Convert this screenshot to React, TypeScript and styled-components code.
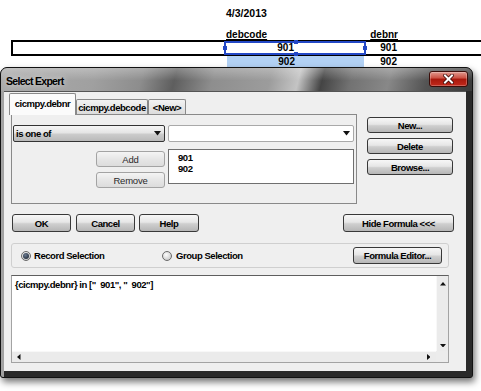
import React from "react";
import styled, { createGlobalStyle, css } from "styled-components";

const UI = `"Liberation Sans", Arial, sans-serif`;
const REPORT = `"Liberation Sans", Arial, sans-serif`;

const GlobalStyle = createGlobalStyle`
  html, body {
    margin: 0;
    padding: 0;
    background: #fff;
    overflow: hidden;
  }
  * {
    box-sizing: border-box;
  }
`;

const Page = styled.div`
  width: 481px;
  height: 391px;
  overflow: hidden;
  display: flex;
  flex-direction: column;
`;

/* ---------- report behind the dialog ---------- */

const Report = styled.div`
  height: 67px;
  display: flex;
  flex-direction: column;
  font-family: ${REPORT};
  font-weight: bold;
  font-size: 10px;
  color: #000;
`;

const DateLine = styled.div`
  height: 30px;
  padding: 7px 0 0 226px;
  font-size: 10.5px;
  line-height: 12px;
`;

const FieldRow = styled.div<{ $height: number }>`
  display: grid;
  grid-template-columns: 211px 142px 32px;
  height: ${(p) => p.$height}px;
  margin-left: 13px;
`;

const DetailBox = styled.div`
  display: grid;
  grid-template-columns: 211px 142px 32px;
  height: 16px;
  margin-left: 11px;
  width: 480px;
  border: 2px solid #000;
  border-right: none;
`;

const HeaderText = styled.div<{ $align: "left" | "right" }>`
  align-self: end;
  line-height: 10px;
  text-decoration: underline;
  text-align: ${(p) => p.$align};
  padding-left: ${(p) => (p.$align === "left" ? 2 : 0)}px;
`;

const SelectedCell = styled.div`
  position: relative;
  margin: -1px 0;
  border: 2px solid #2348c6;
  display: flex;
  align-items: center;
  justify-content: flex-end;
  padding-right: 70px;
  line-height: 10px;
`;

const Handle = styled.span<{ $spot: "left" | "right" | "top" | "bottom" }>`
  position: absolute;
  width: 4px;
  height: 4px;
  background: #2348c6;
  ${(p) =>
    p.$spot === "left"
      ? css`left: -3px; top: 3px;`
      : p.$spot === "right"
      ? css`right: -3px; top: 3px;`
      : p.$spot === "top"
      ? css`top: -3px; left: 68px;`
      : css`bottom: -3px; left: 68px;`}
`;

const HighlightCell = styled.div`
  margin: 0 2px 0 3px;
  background: #b2d1f4;
  display: flex;
  align-items: center;
  justify-content: flex-end;
  padding-right: 69px;
  line-height: 10px;
`;

const ValueCell = styled.div`
  display: flex;
  align-items: center;
  justify-content: flex-end;
  padding-right: 1px;
  line-height: 10px;
`;

/* ---------- dialog window ---------- */

const Dialog = styled.div`
  width: 473px;
  height: 311px;
  display: flex;
  flex-direction: column;
  border: 1px solid #121212;
  border-radius: 7px 7px 3px 3px;
  overflow: hidden;
  background: #262626;
  box-shadow: 2px 4px 7px rgba(0, 0, 0, 0.55);
  font-family: ${UI};
  color: #000;
`;

const TitleBar = styled.div`
  height: 23px;
  flex-shrink: 0;
  display: flex;
  align-items: flex-start;
  justify-content: space-between;
  padding: 0 4px;
  background:
    linear-gradient(180deg, rgba(255, 255, 255, 0.28), rgba(255, 255, 255, 0) 55%),
    linear-gradient(
      104deg,
      #ababab 0%,
      #a0a0a0 20%,
      #8d8d8d 30%,
      #5e5e5e 37%,
      #8e8e8e 45%,
      #9c9c9c 57%,
      #c4c4c4 63%,
      #444 68%,
      #727272 74%,
      #888 82%,
      #545454 90%,
      #3a3a3a 100%
    );
`;

const Title = styled.div`
  padding: 7px 0 0 1px;
  font-size: 10.5px;
  letter-spacing: -0.7px;
  line-height: 13px;
  font-weight: bold;
  color: #000;
  text-shadow: 0 0 6px rgba(255, 255, 255, 0.7);
`;

const CloseButton = styled.div`
  margin-top: 3px;
  width: 39px;
  height: 16px;
  border: 1px solid #3b0c08;
  border-radius: 3px;
  display: flex;
  align-items: center;
  justify-content: center;
  background: linear-gradient(180deg, #e09a8f 0%, #cc5244 42%, #a8180c 52%, #c22a1c 100%);
  box-shadow: inset 0 0 0 1px rgba(255, 255, 255, 0.25);
`;

const Frame = styled.div`
  flex: 1;
  display: flex;
  padding: 0 6px 6px 3px;
  background: linear-gradient(90deg, #a2a2a2 0, #a2a2a2 3px, #2a2a2a 3px);
`;

const Client = styled.div`
  flex: 1;
  display: flex;
  flex-direction: column;
  background: #efefef;
  border-top: 1px solid #555;
  padding: 1px 12px 8px 7px;
  font-size: 9.5px;
  letter-spacing: -0.45px;
  font-weight: bold;
`;

const TopArea = styled.div`
  display: flex;
  align-items: flex-start;
`;

const TabControl = styled.div`
  width: 346px;
  flex-shrink: 0;
  display: flex;
  flex-direction: column;
`;

const TabStrip = styled.div`
  height: 21px;
  display: flex;
  align-items: flex-end;
  position: relative;
  z-index: 1;
`;

const Tab = styled.div<{ $active?: boolean; $width: number }>`
  width: ${(p) => p.$width}px;
  border: 1px solid #898989;
  border-bottom: none;
  border-radius: 2px 2px 0 0;
  display: flex;
  align-items: center;
  justify-content: center;
  line-height: 11px;
  white-space: nowrap;
  ${(p) =>
    p.$active
      ? css`
          height: 22px;
          margin: 0 0 -1px -2px;
          background: #fbfbfb;
          padding-bottom: 2px;
        `
      : css`
          height: 15px;
          margin-left: 0;
          background: linear-gradient(180deg, #f3f3f3, #dcdcdc);
        `}
`;

const TabPanel = styled.div`
  height: 90px;
  border: 1px solid #898989;
  background: #efefef;
  padding: 10px 0 0 1px;
  display: flex;
  flex-direction: column;
`;

const ComboRow = styled.div`
  display: flex;
  gap: 3px;
`;

const Combo = styled.div<{ $width: number; $plain?: boolean }>`
  width: ${(p) => p.$width}px;
  height: 17px;
  display: flex;
  align-items: center;
  justify-content: space-between;
  padding: 0 3px 0 2px;
  border-radius: 2px;
  ${(p) =>
    p.$plain
      ? css`
          background: #fff;
          border: 1px solid #a9a9a9;
        `
      : css`
          border: 1px solid #333;
          background: linear-gradient(180deg, #f6f6f6 0%, #e4e4e4 48%, #cdcdcd 52%, #b9b9b9 100%);
        `}
`;

const EditRow = styled.div`
  margin-top: 7px;
  display: flex;
  gap: 3px;
`;

const ButtonStack = styled.div`
  width: 152px;
  padding: 2px 0 0 83px;
  display: flex;
  flex-direction: column;
  gap: 5px;
`;

const ListBox = styled.div`
  width: 186px;
  height: 35px;
  background: #fff;
  border: 1px solid #6f6f6f;
  padding: 2px 0 0 9px;
  line-height: 11px;
`;

const SideButtons = styled.div`
  margin: 24px 0 0 10px;
  width: 86px;
  display: flex;
  flex-direction: column;
  gap: 5px;
`;

const Button = styled.div<{ $width: number; $height?: number; $soft?: boolean }>`
  width: ${(p) => p.$width}px;
  height: ${(p) => p.$height ?? 16}px;
  flex-shrink: 0;
  display: flex;
  align-items: center;
  justify-content: center;
  border-radius: 3px;
  white-space: nowrap;
  ${(p) =>
    p.$soft
      ? css`
          border: 1px solid #a3a3a3;
          background: linear-gradient(180deg, #f4f4f4 0%, #e6e6e6 50%, #dcdcdc 100%);
          font-weight: normal;
          letter-spacing: -0.2px;
          color: #2a2a2a;
        `
      : css`
          border: 1px solid #383838;
          background: linear-gradient(180deg, #f7f7f7 0%, #e6e6e6 45%, #cfcfcf 55%, #b6b6b6 100%);
        `}
`;

const ButtonRow = styled.div`
  margin-top: 10px;
  height: 18px;
  display: flex;
  align-items: stretch;
  padding-left: 1px;
  gap: 4px;

  & > :nth-child(2) {
    margin-left: 1px;
  }
  & > :last-child {
    margin-left: auto;
  }
`;

const GroupBox = styled.div`
  margin: 11px 5px 0 0;
  height: 25px;
  border: 1px solid #cfcfcf;
  border-radius: 3px;
  display: flex;
  align-items: center;
  padding: 0 6px 0 9px;
`;

const RadioOption = styled.div<{ $width?: number }>`
  display: flex;
  align-items: center;
  gap: 3px;
  ${(p) => p.$width && css`width: ${p.$width}px;`}
`;

const Radio = styled.span<{ $checked?: boolean }>`
  width: 10px;
  height: 10px;
  border-radius: 50%;
  border: 1px solid #6a6a6a;
  background: radial-gradient(circle at 40% 35%, #fdfdfd, #bdbdbd);
  position: relative;
  flex-shrink: 0;
  ${(p) =>
    p.$checked &&
    css`
      &::after {
        content: "";
        position: absolute;
        inset: 1px;
        border-radius: 50%;
        background: radial-gradient(circle at 40% 35%, #6a7a90, #141c28);
      }
    `}
`;

const FormulaBox = styled.div`
  margin: 7px 5px 0 0;
  flex: 1;
  display: grid;
  grid-template-columns: 1fr 12px;
  grid-template-rows: 1fr 11px;
  border: 1px solid #a3a3a3;
  border-top-color: #5e5e5e;
  background: #fff;
`;

const FormulaText = styled.div`
  padding: 3px 0 0 3px;
  line-height: 11px;
  white-space: pre;
`;

const VScroll = styled.div`
  background: #ebebeb;
  border-left: 1px solid #f8f8f8;
  display: flex;
  flex-direction: column;
  align-items: center;
  justify-content: space-between;
  padding: 6px 0 4px;
`;

const HScroll = styled.div`
  background: #ebebeb;
  border-top: 1px solid #f8f8f8;
  display: flex;
  align-items: center;
  justify-content: space-between;
  padding: 0 6px 0 5px;
`;

const Corner = styled.div`
  background: #ececec;
`;

type Dir = "up" | "down" | "left" | "right";

const Arrow = ({ dir, size = 7 }: { dir: Dir; size?: number }) => {
  const h = Math.ceil(size / 2) + 0.5;
  const pts: Record<Dir, string> = {
    down: `0,0 ${size},0 ${size / 2},${h}`,
    up: `0,${h} ${size},${h} ${size / 2},0`,
    right: `0,0 0,${size} ${h},${size / 2}`,
    left: `${h},0 ${h},${size} 0,${size / 2}`,
  };
  const vertical = dir === "up" || dir === "down";
  return (
    <svg width={vertical ? size : h} height={vertical ? h : size} style={{ display: "block" }}>
      <polygon points={pts[dir]} fill="#111" />
    </svg>
  );
};

const CloseGlyph = () => (
  <svg width="11" height="10" viewBox="0 0 11 10">
    <path d="M2 1.5 L9 8.5 M9 1.5 L2 8.5" stroke="#3a0704" strokeWidth="3.6" strokeLinecap="square" />
    <path d="M2 1.5 L9 8.5 M9 1.5 L2 8.5" stroke="#fff" strokeWidth="2" strokeLinecap="square" />
  </svg>
);

export default function App() {
  return (
    <Page>
      <GlobalStyle />
      <Report>
        <DateLine>4/3/2013</DateLine>
        <FieldRow $height={10}>
          <div />
          <HeaderText $align="left">debcode</HeaderText>
          <HeaderText $align="right">debnr</HeaderText>
        </FieldRow>
        <DetailBox>
          <div />
          <SelectedCell>
            901
            <Handle $spot="left" />
            <Handle $spot="right" />
            <Handle $spot="top" />
            <Handle $spot="bottom" />
          </SelectedCell>
          <ValueCell>901</ValueCell>
        </DetailBox>
        <FieldRow $height={11}>
          <div />
          <HighlightCell>902</HighlightCell>
          <ValueCell>902</ValueCell>
        </FieldRow>
      </Report>

      <Dialog>
        <TitleBar>
          <Title>Select Expert</Title>
          <CloseButton>
            <CloseGlyph />
          </CloseButton>
        </TitleBar>
        <Frame>
          <Client>
            <TopArea>
              <TabControl>
                <TabStrip>
                  <Tab $active $width={67}>cicmpy.debnr</Tab>
                  <Tab $width={72}>cicmpy.debcode</Tab>
                  <Tab $width={38}>&lt;New&gt;</Tab>
                </TabStrip>
                <TabPanel>
                  <ComboRow>
                    <Combo $width={152}>
                      <span>is one of</span>
                      <Arrow dir="down" />
                    </Combo>
                    <Combo $width={186} $plain>
                      <span />
                      <Arrow dir="down" />
                    </Combo>
                  </ComboRow>
                  <EditRow>
                    <ButtonStack>
                      <Button $width={69} $soft>Add</Button>
                      <Button $width={69} $soft>Remove</Button>
                    </ButtonStack>
                    <ListBox>
                      <div>901</div>
                      <div>902</div>
                    </ListBox>
                  </EditRow>
                </TabPanel>
              </TabControl>
              <SideButtons>
                <Button $width={86}>New...</Button>
                <Button $width={86}>Delete</Button>
                <Button $width={86}>Browse...</Button>
              </SideButtons>
            </TopArea>

            <ButtonRow>
              <Button $width={59} $height={18}>OK</Button>
              <Button $width={59} $height={18}>Cancel</Button>
              <Button $width={60} $height={18}>Help</Button>
              <Button $width={111} $height={18}>Hide Formula &lt;&lt;&lt;</Button>
            </ButtonRow>

            <GroupBox>
              <RadioOption $width={141}>
                <Radio $checked />
                <span>Record Selection</span>
              </RadioOption>
              <RadioOption>
                <Radio />
                <span style={{ marginLeft: 1 }}>Group Selection</span>
              </RadioOption>
              <Button $width={89} $height={17} style={{ marginLeft: "auto" }}>
                Formula Editor...
              </Button>
            </GroupBox>

            <FormulaBox>
              <FormulaText>{'{cicmpy.debnr} in ["  901", "  902"]'}</FormulaText>
              <VScroll>
                <Arrow dir="up" size={6} />
                <Arrow dir="down" size={6} />
              </VScroll>
              <HScroll>
                <Arrow dir="left" size={6} />
                <Arrow dir="right" size={6} />
              </HScroll>
              <Corner />
            </FormulaBox>
          </Client>
        </Frame>
      </Dialog>
    </Page>
  );
}
